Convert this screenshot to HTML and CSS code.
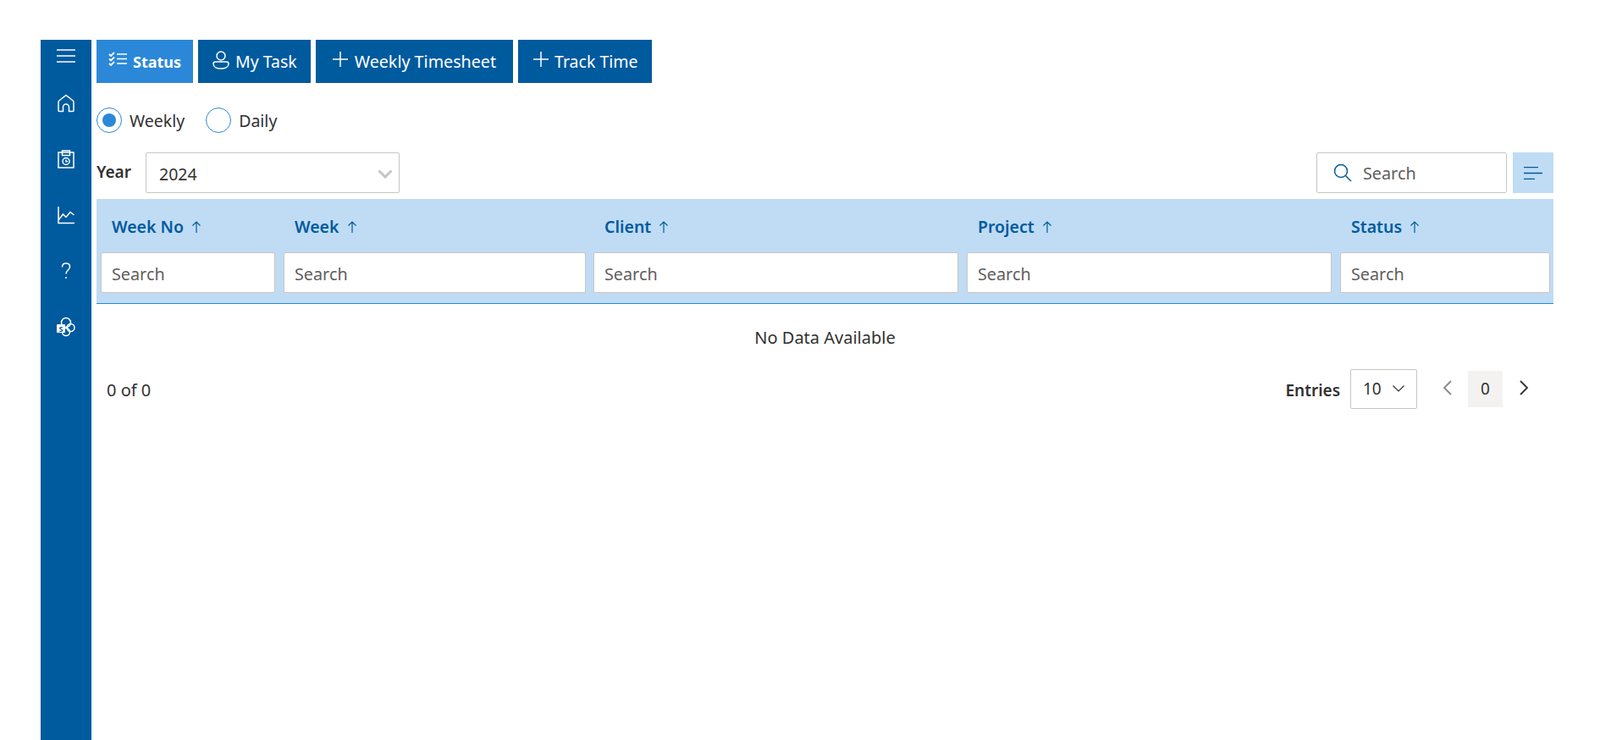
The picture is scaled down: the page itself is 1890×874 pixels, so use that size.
FILE: index.html
```html
<!DOCTYPE html>
<html lang="en">
<head>
    <meta charset="UTF-8">
    <meta name="viewport" content="width=device-width, initial-scale=1.0">
    <title>Timesheet Status</title>
    <link rel="stylesheet" href="styles.css">
</head>
<body>
    <div class="app">
        <nav class="sidebar">
            <svg class="nav-menu" width="22" height="16" viewBox="0 0 22 16"><path d="M0 1h22M0 8h22M0 15h22" /></svg>
            <svg class="nav-icon" width="22" height="22" viewBox="0 0 22 22"><path d="M2 19.500V9.500a2 2 0 0 1 .7-1.500L11 1.500 19.300 8a2 2 0 0 1 .7 1.500v10a1 1 0 0 1-1 1h-4.500v-5a3.500 3.500 0 0 0-7 0v5H3a1 1 0 0 1-1-1z" /></svg>
            <svg class="nav-icon" width="22" height="22" viewBox="0 0 22 22"><path d="M2 3h18v18H2zM6.500 1h9v5.500h-9z" /><circle cx="11" cy="13.500" r="4" /><path d="M11 11.500v2.200h2" /></svg>
            <svg class="nav-icon" width="22" height="22" viewBox="0 0 22 22"><path d="M2 1v19.500h19M2 17l5.500-7 3.500 3.500 5-6 4.500 3.500" /></svg>
            <svg class="nav-icon" width="22" height="22" viewBox="0 0 22 22"><path d="M6.500 6.500C6.500 3.500 8.500 2 11 2s4.500 1.500 4.500 4c0 4-4.500 4-4.500 8.500" /><path d="M11 18v2" /></svg>
            <svg class="nav-icon" width="24" height="24" viewBox="0 0 24 24"><circle cx="12" cy="7" r="5.500" /><circle cx="17.500" cy="13" r="4.500" /><circle cx="12" cy="18" r="4.500" /><rect class="sp-box" x="1" y="9" width="10" height="10" rx="1" /><text class="sp-letter" x="6" y="17.500">S</text></svg>
        </nav>

        <main class="content">
            <div class="tabs">
                <button class="tab tab-active">
                    <svg class="tab-icon" width="23" height="17" viewBox="0 0 23 17"><path class="check-marks" d="M1 3l2 2 4-4M1 8.500l2 2 4-4M1 14l2 2 4-4" /><path d="M10 3h12M10 8.500h12M10 14h12" /></svg>
                    Status
                </button>
                <button class="tab tab-task">
                    <svg class="tab-icon" width="20" height="22" viewBox="0 0 20 22"><circle cx="10" cy="6" r="5" /><path d="M3.500 13h13a2.500 2.500 0 0 1 2.500 2.500c0 3.500-4 5.500-9 5.500s-9-2-9-5.500A2.500 2.500 0 0 1 3.500 13z" /></svg>
                    My Task
                </button>
                <button class="tab tab-plus tab-weekly">
                    <svg class="tab-icon plus-icon" width="18" height="18" viewBox="0 0 18 18"><path d="M9 0v18M0 9h18" /></svg>
                    Weekly Timesheet
                </button>
                <button class="tab tab-plus tab-track">
                    <svg class="tab-icon plus-icon" width="18" height="18" viewBox="0 0 18 18"><path d="M9 0v18M0 9h18" /></svg>
                    Track Time
                </button>
            </div>

            <div class="radios">
                <label class="radio"><span class="radio-circle radio-checked"></span>Weekly</label>
                <label class="radio"><span class="radio-circle"></span>Daily</label>
            </div>

            <div class="toolbar">
                <span class="year-label">Year</span>
                <div class="year-select">
                    <span>2024</span>
                    <svg width="18" height="11" viewBox="0 0 18 11"><path d="M1.500 1.500L9 9l7.500-7.500" /></svg>
                </div>
                <div class="search-box">
                    <svg width="22" height="22" viewBox="0 0 22 22"><circle cx="9" cy="9" r="7.500" /><path d="M14.500 14.500L21 21" /></svg>
                    <input type="text" class="search-input" placeholder="Search">
                </div>
                <button class="filter-btn">
                    <svg width="22" height="15" viewBox="0 0 22 15"><path d="M0 .5h17M0 7.500h22M0 14.500h13" /></svg>
                </button>
            </div>

            <table class="grid">
                <colgroup>
                    <col class="col-no"><col class="col-week"><col class="col-wide"><col class="col-wide"><col>
                </colgroup>
                <thead>
                    <tr class="head-row">
                        <th>Week No <svg class="sort" width="12" height="14" viewBox="0 0 12 14"><path d="M6 14V1M1.500 5.500L6 1l4.500 4.500" /></svg></th>
                        <th>Week <svg class="sort" width="12" height="14" viewBox="0 0 12 14"><path d="M6 14V1M1.500 5.500L6 1l4.500 4.500" /></svg></th>
                        <th>Client <svg class="sort" width="12" height="14" viewBox="0 0 12 14"><path d="M6 14V1M1.500 5.500L6 1l4.500 4.500" /></svg></th>
                        <th>Project <svg class="sort" width="12" height="14" viewBox="0 0 12 14"><path d="M6 14V1M1.500 5.500L6 1l4.500 4.500" /></svg></th>
                        <th>Status <svg class="sort" width="12" height="14" viewBox="0 0 12 14"><path d="M6 14V1M1.500 5.500L6 1l4.500 4.500" /></svg></th>
                    </tr>
                    <tr class="filter-row">
                        <td><input type="text" placeholder="Search"></td>
                        <td class="filter-tight"><input type="text" placeholder="Search"></td>
                        <td><input type="text" placeholder="Search"></td>
                        <td><input type="text" placeholder="Search"></td>
                        <td class="filter-tight"><input type="text" placeholder="Search"></td>
                    </tr>
                </thead>
                <tbody>
                    <tr><td class="empty" colspan="5">No Data Available</td></tr>
                </tbody>
            </table>

            <div class="pager">
                <span class="count">0 of 0</span>
                <span class="entries-label">Entries</span>
                <div class="entries-select">
                    <span>10</span>
                    <svg width="14" height="8" viewBox="0 0 14 8"><path d="M.5.500L7 7l6.500-6.500" /></svg>
                </div>
                <svg class="page-arrow page-prev" width="11" height="18" viewBox="0 0 11 18"><path d="M10 1L2 9l8 8" /></svg>
                <span class="page-num">0</span>
                <svg class="page-arrow" width="11" height="18" viewBox="0 0 11 18"><path d="M1 1l8 8-8 8" /></svg>
            </div>
        </main>
    </div>
</body>
</html>
```

FILE: styles.css
```css
* {
    box-sizing: border-box;
}
body {
    margin: 0;
    font-family: "Noto Sans", sans-serif;
    color: #323130;
    background: #fff;
}
svg {
    fill: none;
    stroke: currentColor;
    flex-shrink: 0;
}
.app {
    display: flex;
    height: 100vh;
    padding: 47px 55px 0 48px;
    overflow: hidden;
}

/* left nav */
.sidebar {
    width: 60px;
    background: #005a9e;
    color: #fff;
    display: flex;
    flex-direction: column;
    align-items: center;
    flex-shrink: 0;
}
.nav-menu {
    margin-top: 11px;
    margin-bottom: 37px;
    stroke-width: 1.5;
}
.nav-icon {
    margin-bottom: 44px;
    stroke-width: 1.5;
}
.sidebar .nav-icon:last-child {
    margin-top: -1px;
}
.sp-box {
    fill: #fff;
    stroke: none;
}
.sp-letter {
    fill: #005a9e;
    stroke: none;
    font-size: 9px;
    font-weight: 700;
    text-anchor: middle;
}

.content {
    flex: 1;
    padding-left: 6px;
    min-width: 0;
}

/* top buttons */
.tabs {
    display: flex;
    gap: 6px;
}
.tab {
    height: 51px;
    border: 0;
    padding: 0 16px;
    background: #005a9e;
    color: #fff;
    font-family: inherit;
    font-size: 19.5px;
    display: flex;
    align-items: center;
    gap: 7px;
}
.tab-active {
    background: #2b88d8;
    font-size: 18px;
    font-weight: 700;
    padding: 0 14px;
    gap: 6px;
}
.tab-active .tab-icon {
    margin-top: -6px;
}
.check-marks {
    stroke-width: 1.8;
}
.tab-task {
    padding: 0 16px 0 17px;
}
.tab-task .tab-icon {
    margin-top: -3px;
}
.tab-plus {
    gap: 8px;
}
.tab-weekly {
    padding: 0 20px;
    font-size: 19.7px;
}
.tab-track {
    padding: 0 16px 0 18px;
    gap: 7px;
}
.plus-icon {
    margin-top: -5px;
}
.tab-icon {
    stroke-width: 1.5;
}

/* weekly / daily */
.radios {
    display: flex;
    gap: 25px;
    margin-top: 29px;
}
.radio {
    display: flex;
    align-items: center;
    gap: 9px;
    font-size: 19.5px;
    height: 30px;
}
.radio-circle {
    width: 30px;
    height: 30px;
    border: 1px solid #2b88d8;
    border-radius: 50%;
    display: flex;
    align-items: center;
    justify-content: center;
}
.radio-checked::after {
    content: "";
    width: 16px;
    height: 16px;
    border-radius: 50%;
    background: #2b88d8;
}

/* year + search */
.toolbar {
    display: flex;
    align-items: center;
    margin-top: 23px;
    height: 48px;
}
.year-label {
    font-size: 19px;
    font-weight: 600;
    width: 58px;
    margin-top: -3px;
}
.year-select {
    width: 300px;
    height: 48px;
    border: 1px solid #c8c6c4;
    border-radius: 2px;
    padding: 2px 15px 0;
    font-size: 19.5px;
    display: flex;
    align-items: center;
    justify-content: space-between;
}
.year-select svg {
    color: #c8c6c4;
    stroke-width: 3;
    margin-right: -8px;
}
.search-box {
    margin-left: auto;
    width: 225px;
    height: 48px;
    border: 1px solid #c8c6c4;
    border-radius: 2px;
    padding-left: 19px;
    display: flex;
    align-items: center;
    gap: 13px;
}
.search-box svg {
    color: #005a9e;
    stroke-width: 1.5;
}
.search-input {
    border: 0;
    outline: 0;
    width: 130px;
    font-family: inherit;
    font-size: 19.8px;
    padding: 0;
}
.filter-btn {
    width: 48px;
    height: 48px;
    margin-left: 7px;
    border: 0;
    padding: 0;
    background: #bfdcf4;
    color: #005a9e;
    display: flex;
    align-items: center;
    justify-content: center;
}
.filter-btn svg {
    stroke-width: 1.5;
}

/* table */
.grid {
    width: 100%;
    table-layout: fixed;
    border-collapse: collapse;
    margin-top: 7px;
}
.col-no {
    width: 216px;
}
.col-week {
    width: 366px;
}
.col-wide {
    width: 441px;
}
.head-row th {
    height: 63px;
    padding: 2px 0 0 18px;
    background: #bfdcf4;
    color: #005a9e;
    font-size: 19.5px;
    font-weight: 600;
    text-align: left;
}
.sort {
    margin-left: 4px;
    stroke-width: 1.2;
}
.filter-row td {
    height: 60px;
    padding: 0 5px 12px;
    background: #bfdcf4;
    border-bottom: 1px solid #2b88d8;
}
.filter-row .filter-tight {
    padding-right: 4px;
}
.filter-row input {
    width: 100%;
    height: 48px;
    border: 1px solid #c8c6c4;
    border-radius: 2px;
    padding: 2px 12px 0;
    font-family: inherit;
    font-size: 19.8px;
    outline: 0;
}
input::placeholder {
    color: #605e5c;
    opacity: 1;
}
.empty {
    height: 79px;
    text-align: center;
    font-size: 20px;
}

/* paging */
.pager {
    display: flex;
    align-items: center;
    height: 47px;
    margin-top: -2px;
    font-size: 19px;
}
.count {
    margin-left: 12px;
    margin-right: auto;
    padding-top: 2px;
    font-size: 20px;
}
.entries-label {
    font-weight: 600;
    padding-top: 3px;
}
.entries-select {
    width: 79px;
    height: 47px;
    margin-left: 12px;
    border: 1px solid #c8c6c4;
    border-radius: 2px;
    padding: 0 14px;
    display: flex;
    align-items: center;
    justify-content: space-between;
}
.entries-select svg {
    stroke-width: 1.2;
}
.page-arrow {
    stroke-width: 1.8;
    margin-right: 29px;
    margin-top: -3px;
}
.page-prev {
    color: #8a8886;
    margin-left: 30px;
    margin-right: 19px;
}
.page-num {
    width: 41px;
    height: 43px;
    margin-right: 20px;
    background: #f3f2f1;
    display: flex;
    align-items: center;
    justify-content: center;
}
```
